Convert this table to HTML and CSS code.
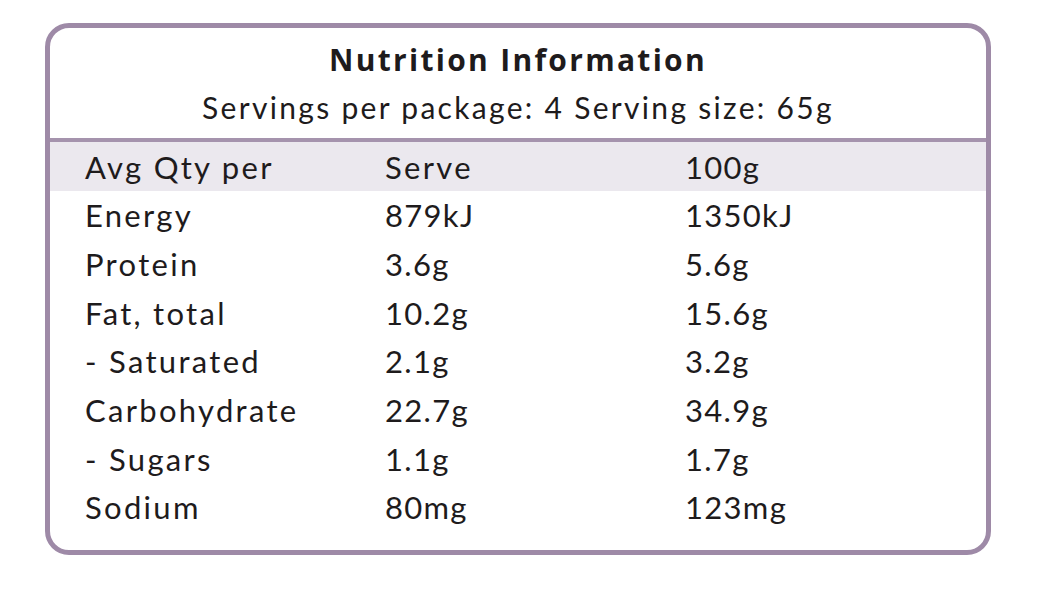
FILE: index.html
```html
<!DOCTYPE html>
<html>
<head>
<meta charset="utf-8">
<link rel="stylesheet" href="styles.css">
</head>
<body>
<div class="panel">
  <div class="head">
    <div class="title">Nutrition Information</div>
    <div class="sub">Servings per package: 4 Serving size: 65g</div>
  </div>
  <div class="table">
    <div class="row hdr"><span class="lbl">Avg Qty per</span><span class="lbl">Serve</span><span>100g</span></div>
    <div class="row"><span class="lbl">Energy</span><span>879kJ</span><span>1350kJ</span></div>
    <div class="row"><span class="lbl">Protein</span><span>3.6g</span><span>5.6g</span></div>
    <div class="row"><span class="lbl">Fat, total</span><span>10.2g</span><span>15.6g</span></div>
    <div class="row"><span class="lbl">- Saturated</span><span>2.1g</span><span>3.2g</span></div>
    <div class="row"><span class="lbl">Carbohydrate</span><span>22.7g</span><span>34.9g</span></div>
    <div class="row"><span class="lbl">- Sugars</span><span>1.1g</span><span>1.7g</span></div>
    <div class="row"><span class="lbl">Sodium</span><span>80mg</span><span>123mg</span></div>
  </div>
</div>
</body>
</html>
```

FILE: styles.css
```css
html, body {
  margin: 0;
  padding: 0;
  background: #ffffff;
}
body {
  padding: 23px 0 0 45px;
  font-family: "Lato", "Open Sans", sans-serif;
  color: #1e1b1c;
}
.panel {
  box-sizing: border-box;
  width: 946px;
  height: 532px;
  border: 5px solid #9e8aa7;
  border-radius: 24px;
  overflow: hidden;
  background: #fff;
}
.head {
  height: 114px;
  border-bottom: 4px solid #a593ad;
  display: flex;
  flex-direction: column;
  align-items: center;
  padding-top: 12px;
  box-sizing: border-box;
}
.title {
  font-family: "Open Sans", "Lato", sans-serif;
  font-weight: 700;
  font-size: 30px;
  line-height: 40px;
  letter-spacing: 2.3px;
}
.sub {
  font-size: 30px;
  line-height: 40px;
  letter-spacing: 2.3px;
  margin-top: 7px;
}
.table {
  display: flex;
  flex-direction: column;
}
.row {
  display: grid;
  grid-template-columns: 300px 300px 1fr;
  padding-left: 35px;
  height: 48.7px;
  align-items: center;
  font-size: 31px;
  letter-spacing: 1.3px;
}
.row .lbl {
  letter-spacing: 2.3px;
}
.row.hdr {
  background: #ebe8ee;
  height: 49px;
}
```
